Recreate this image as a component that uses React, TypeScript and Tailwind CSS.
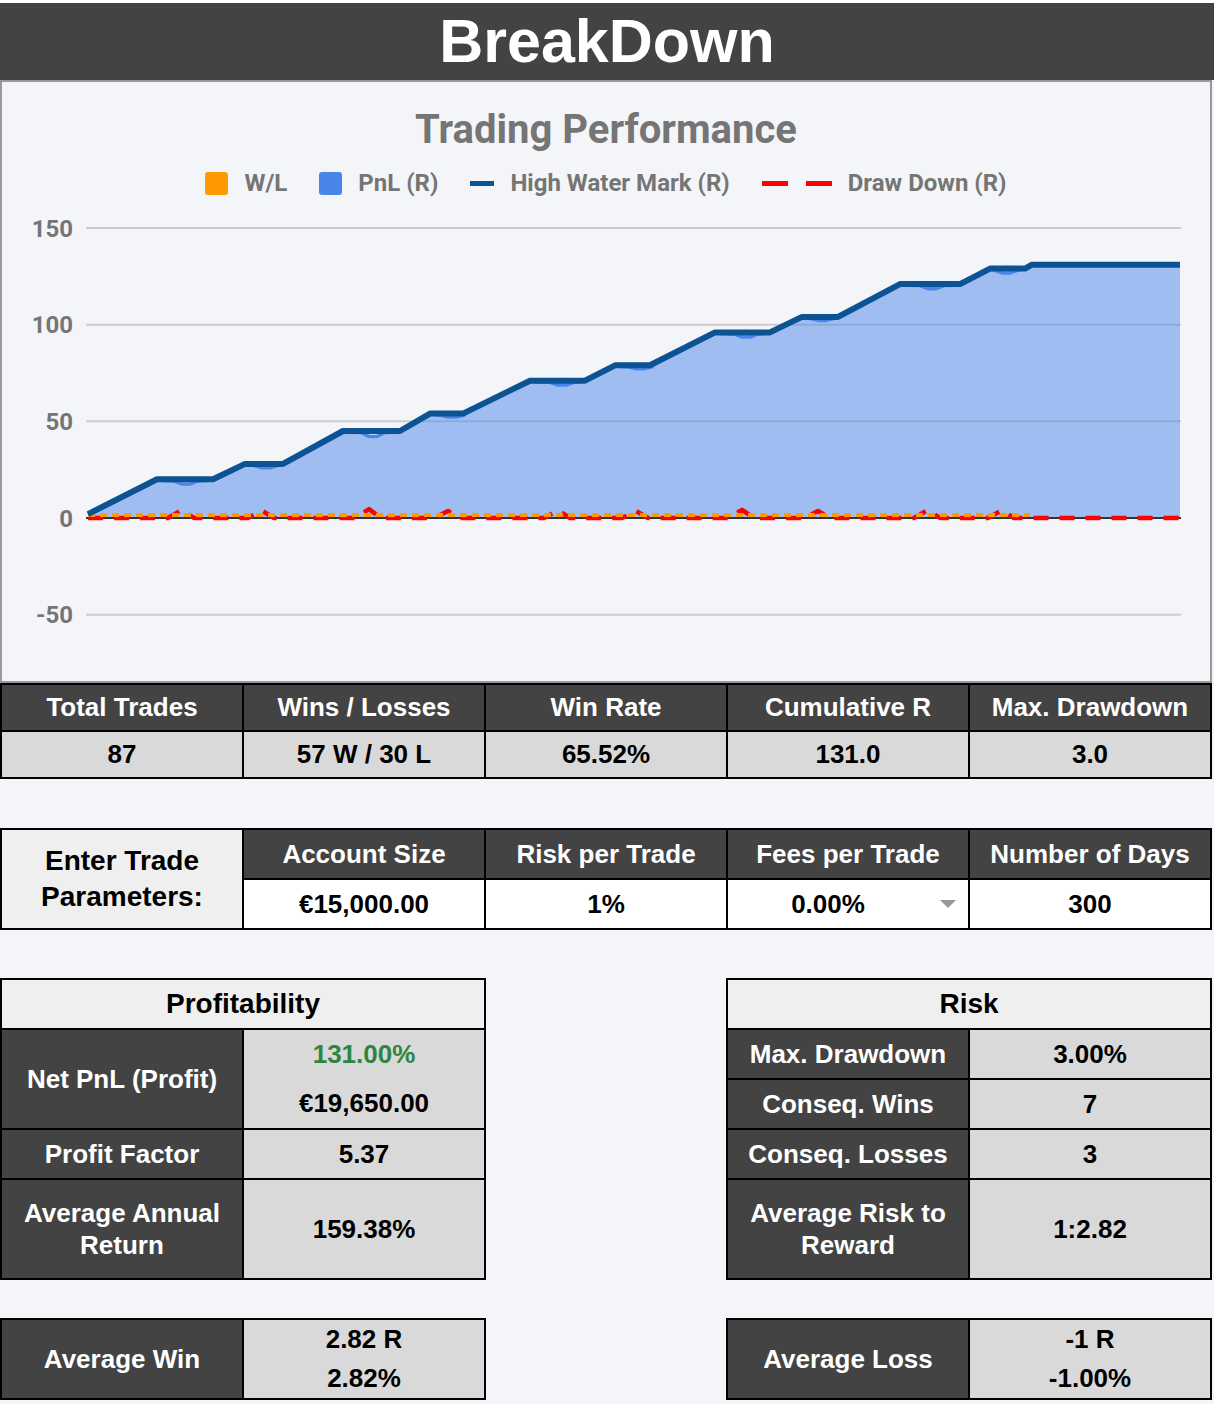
import React from "react";

type P = [number, number];

const HWM: P[] = [
  [88, 2], [157, 20], [213, 20], [245, 28], [283, 28], [343, 45], [400, 45], [430, 54], [463, 54],
  [530, 71], [585, 71], [615, 79], [650, 79], [715, 96], [770, 96], [802, 104], [838, 104],
  [900, 121], [960, 121], [990, 129], [1025, 129], [1032, 131], [1180, 131],
];

const DIPS: Record<number, [number, number]> = {
  157: [186, 2.4], 245: [266, 2], 343: [373, 2.8], 430: [452, 1.8], 530: [562, 2.2],
  615: [640, 1.8], 715: [746, 2.4], 802: [822, 1.8], 900: [932, 2.4], 990: [1006, 2.2],
};

const TOP = 197;
const LEFT = 2;
const X = (px: number) => px - LEFT;
const Y = (v: number) => 518 - TOP - v * 1.9333;

function buildPnl(): P[] {
  const out: P[] = [];
  for (let i = 0; i < HWM.length; i++) {
    const [x, v] = HWM[i];
    out.push([x, v]);
    const nxt = HWM[i + 1];
    if (nxt && nxt[1] === v && DIPS[x]) {
      const [xd, d] = DIPS[x];
      out.push([x + 6, v - 0.6]);
      out.push([xd - 12, v - 0.8]);
      out.push([xd - 4, v - d]);
      out.push([xd + 4, v - d]);
      out.push([xd + 12, v - 0.8]);
      out.push([nxt[0] - 6, v - 0.6]);
    }
  }
  return out;
}

function buildDD(): P[] {
  const out: P[] = [[88, 0]];
  Object.values(DIPS).forEach(([xd, d]) => {
    out.push([xd - 18, 0]);
    out.push([xd - 4, d + 1.8]);
    out.push([xd + 8, 0]);
  });
  out.push([1180, 0]);
  return out;
}

const toD = (pts: P[]) => pts.map((p, i) => `${i ? "L" : "M"}${X(p[0]).toFixed(1)} ${Y(p[1]).toFixed(1)}`).join(" ");

function Chart() {
  const pnl = buildPnl();
  const dd = buildDD();
  const area = `${toD(pnl)} L${X(1180)} ${Y(0)} L${X(88)} ${Y(0)} Z`;
  const grid = [150, 100, 50, -50];
  const labels = [150, 100, 50, 0, -50];
  return (
    <svg width={1208} height={484} viewBox="0 0 1208 484" className="block">
      {grid.map((g) => (
        <line key={g} x1={X(86)} x2={X(1181)} y1={Y(g)} y2={Y(g)} stroke="#cccccc" strokeWidth={2} />
      ))}
      {labels.map((l) => (
        <text
          key={l}
          x={X(73)}
          y={Y(l)}
          dy="0.36em"
          textAnchor="end"
          fill="#757575"
          style={{ fontFamily: "Roboto, 'Liberation Sans', sans-serif", fontWeight: 700, fontSize: 24 }}
        >
          {l}
        </text>
      ))}
      <path d={area} fill="#4a86e8" fillOpacity={0.5} />
      <line x1={X(86)} x2={X(1181)} y1={Y(0)} y2={Y(0)} stroke="#333333" strokeWidth={2} />
      <path d={toD(dd)} stroke="#ff0000" strokeWidth={4.5} strokeDasharray="15 11" fill="none" strokeLinejoin="round" />
      <path d={`M${X(88)} ${Y(1.5)} L${X(1030)} ${Y(1.5)}`} stroke="#ff9900" strokeWidth={4} strokeDasharray="7 5" fill="none" />
      <path d={toD(pnl)} stroke="#4a86e8" strokeWidth={3.5} fill="none" strokeLinejoin="round" />
      <path d={toD(HWM)} stroke="#0b5394" strokeWidth={6} fill="none" strokeLinejoin="round" />
    </svg>
  );
}

function Legend() {
  return (
    <div className="mt-[17px] flex h-[28px] items-center justify-center gap-[32px] text-[24px] font-bold text-[#757575]" style={{ fontFamily: "Roboto, 'Liberation Sans', sans-serif" }}>
      <div className="flex items-center gap-[16px]">
        <span className="block h-[23px] w-[23px] rounded-[3px] bg-[#ff9900]" />
        <span>W/L</span>
      </div>
      <div className="flex items-center gap-[16px]">
        <span className="block h-[23px] w-[23px] rounded-[3px] bg-[#4a86e8]" />
        <span>PnL (R)</span>
      </div>
      <div className="flex items-center gap-[16px]">
        <span className="block h-[5px] w-[24px] bg-[#0b5394]" />
        <span>High Water Mark (R)</span>
      </div>
      <div className="flex items-center gap-[16px]">
        <span className="flex gap-[18px]">
          <span className="block h-[5px] w-[26px] bg-[#ff0000]" />
          <span className="block h-[5px] w-[26px] bg-[#ff0000]" />
        </span>
        <span>Draw Down (R)</span>
      </div>
    </div>
  );
}

const dark = "flex items-center justify-center bg-[#434343] text-white text-center";
const light = "flex items-center justify-center bg-[#d9d9d9] text-black text-center";

export default function App() {
  return (
    <div className="min-h-[1404px] w-full bg-[#f4f5f9] font-bold" style={{ fontFamily: "'Liberation Sans', Arial, sans-serif" }}>
      <div className="w-[1214px]">
        <div className="h-[3px] bg-white" />
        <div className="flex h-[77px] items-center justify-center bg-[#434343]">
          <h1 className="text-[61px] font-bold leading-none text-white">BreakDown</h1>
        </div>

        <div className="h-[603px] w-[1212px] border-2 border-[#999999] bg-[#f4f5f9]">
          <div className="pt-[26px] text-center text-[40px] font-bold leading-[44px] text-[#757575]" style={{ fontFamily: "Roboto, 'Liberation Sans', sans-serif" }}>
            Trading Performance
          </div>
          <Legend />
          <Chart />
        </div>

        <div className="grid w-[1212px] grid-cols-5 gap-[2px] bg-black p-[2px] text-[26px]">
          {["Total Trades", "Wins / Losses", "Win Rate", "Cumulative R", "Max. Drawdown"].map((h) => (
            <div key={h} className={`${dark} h-[45px]`}>{h}</div>
          ))}
          {["87", "57 W / 30 L", "65.52%", "131.0", "3.0"].map((v) => (
            <div key={v} className={`${light} h-[45px]`}>{v}</div>
          ))}
        </div>

        <div className="h-[49px]" />

        <div className="grid w-[1212px] grid-cols-5 grid-rows-[48px_48px] gap-[2px] bg-black p-[2px] text-[26px]">
          <div className="row-span-2 flex items-center justify-center bg-[#efefef] text-center text-[28px] leading-[36px] text-black">
            Enter Trade
            <br />
            Parameters:
          </div>
          {["Account Size", "Risk per Trade", "Fees per Trade", "Number of Days"].map((h) => (
            <div key={h} className={dark}>{h}</div>
          ))}
          <div className="flex items-center justify-center bg-white text-black">€15,000.00</div>
          <div className="flex items-center justify-center bg-white text-black">1%</div>
          <div className="flex items-center bg-white pr-[12px] text-black">
            <span className="flex-1 text-center">0.00%</span>
            <svg width="16" height="8" viewBox="0 0 16 8" className="ml-[12px] block">
              <path d="M0 0 L16 0 L8 8 Z" fill="#999999" />
            </svg>
          </div>
          <div className="flex items-center justify-center bg-white text-black">300</div>
        </div>

        <div className="h-[48px]" />

        <div className="flex w-[1212px] justify-between text-[26px]">
          <div className="grid w-[486px] grid-cols-2 gap-[2px] bg-black p-[2px]">
            <div className="col-span-2 flex h-[48px] items-center justify-center bg-[#efefef] text-[28px] text-black">Profitability</div>
            <div className={`${dark} h-[98px]`}>Net PnL (Profit)</div>
            <div className="flex h-[98px] flex-col bg-[#d9d9d9]">
              <div className="flex h-[49px] items-center justify-center text-[#2e8540]">131.00%</div>
              <div className="flex h-[49px] items-center justify-center text-black">€19,650.00</div>
            </div>
            <div className={`${dark} h-[48px]`}>Profit Factor</div>
            <div className={`${light} h-[48px]`}>5.37</div>
            <div className={`${dark} h-[98px] leading-[32px]`}>
              Average Annual
              <br />
              Return
            </div>
            <div className={`${light} h-[98px]`}>159.38%</div>
          </div>

          <div className="grid w-[486px] grid-cols-2 gap-[2px] bg-black p-[2px]">
            <div className="col-span-2 flex h-[48px] items-center justify-center bg-[#efefef] text-[28px] text-black">Risk</div>
            <div className={`${dark} h-[48px]`}>Max. Drawdown</div>
            <div className={`${light} h-[48px]`}>3.00%</div>
            <div className={`${dark} h-[48px]`}>Conseq. Wins</div>
            <div className={`${light} h-[48px]`}>7</div>
            <div className={`${dark} h-[48px]`}>Conseq. Losses</div>
            <div className={`${light} h-[48px]`}>3</div>
            <div className={`${dark} h-[98px] leading-[32px]`}>
              Average Risk to
              <br />
              Reward
            </div>
            <div className={`${light} h-[98px]`}>1:2.82</div>
          </div>
        </div>

        <div className="h-[38px]" />

        <div className="flex w-[1212px] justify-between text-[26px]">
          <div className="grid w-[486px] grid-cols-2 gap-[2px] bg-black p-[2px]">
            <div className={`${dark} h-[78px]`}>Average Win</div>
            <div className="flex h-[78px] flex-col bg-[#d9d9d9] text-black">
              <div className="flex h-[39px] items-center justify-center">2.82 R</div>
              <div className="flex h-[39px] items-center justify-center">2.82%</div>
            </div>
          </div>
          <div className="grid w-[486px] grid-cols-2 gap-[2px] bg-black p-[2px]">
            <div className={`${dark} h-[78px]`}>Average Loss</div>
            <div className="flex h-[78px] flex-col bg-[#d9d9d9] text-black">
              <div className="flex h-[39px] items-center justify-center">-1 R</div>
              <div className="flex h-[39px] items-center justify-center">-1.00%</div>
            </div>
          </div>
        </div>
      </div>
    </div>
  );
}
